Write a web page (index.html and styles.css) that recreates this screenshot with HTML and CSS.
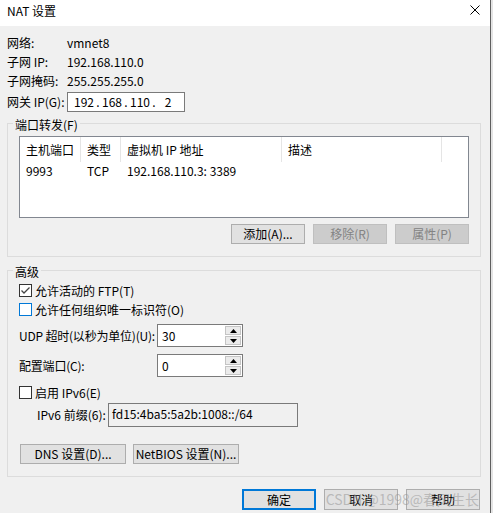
FILE: index.html
```
<!DOCTYPE html>
<html lang="zh-CN">
<head>
<meta charset="utf-8">
<title>NAT 设置</title>
<link rel="stylesheet" href="styles.css">
</head>
<body>
<div class="screen">
  <div class="dialog">
    <div class="titlebar">
      <span class="title">NAT 设置</span>
      <svg class="close" width="10" height="10" viewBox="0 0 10 10"><path d="M0.5 0.5 L9.5 9.5 M9.5 0.5 L0.5 9.5" stroke="#000" stroke-width="1" fill="none"/></svg>
    </div>
    <div class="body">
      <div class="info">
        <div class="info-row r1"><span class="lbl">网络:</span><span>vmnet8</span></div>
        <div class="info-row r2"><span class="lbl">子网 IP:</span><span>192.168.110.0</span></div>
        <div class="info-row r3"><span class="lbl">子网掩码:</span><span>255.255.255.0</span></div>
        <div class="info-row gw"><span class="lbl">网关 IP(G):</span>
          <div class="ipbox"><span class="oct">192</span><span class="dot">.</span><span class="oct">168</span><span class="dot">.</span><span class="oct">110</span><span class="dot">.</span><span class="oct">2</span></div>
        </div>
      </div>

      <fieldset class="group pf">
        <legend>端口转发(F)</legend>
        <div class="list">
          <div class="list-head">
            <div class="col c1">主机端口</div>
            <div class="col c2">类型</div>
            <div class="col c3">虚拟机 IP 地址</div>
            <div class="col c4">描述</div>
            <div class="col c5"></div>
          </div>
          <div class="list-row">
            <div class="col c1">9993</div>
            <div class="col c2">TCP</div>
            <div class="col c3">192.168.110.3: 3389</div>
            <div class="col c4"></div>
          </div>
        </div>
        <div class="btn-row">
          <button class="btn">添加(A)...</button>
          <button class="btn disabled">移除(R)</button>
          <button class="btn disabled">属性(P)</button>
        </div>
      </fieldset>

      <fieldset class="group adv">
        <legend>高级</legend>
        <div class="check-row">
          <span class="cbox"><svg width="11" height="11" viewBox="0 0 11 11"><path d="M1.5 5.5 L4 8 L9.5 2.5" stroke="#444" stroke-width="1.3" fill="none"/></svg></span>
          <span>允许活动的 FTP(T)</span>
        </div>
        <div class="check-row">
          <span class="cbox hover"></span>
          <span>允许任何组织唯一标识符(O)</span>
        </div>
        <div class="spin-row udp">
          <span class="spin-lbl">UDP 超时(以秒为单位)(U):</span>
          <div class="spin">
            <span class="spin-val">30</span>
            <div class="spin-btns">
              <span class="sbtn"><svg width="7" height="4" viewBox="0 0 7 4"><path d="M0 4 L3.5 0 L7 4 Z" fill="#000"/></svg></span>
              <span class="sbtn"><svg width="7" height="4" viewBox="0 0 7 4"><path d="M0 0 L7 0 L3.5 4 Z" fill="#000"/></svg></span>
            </div>
          </div>
        </div>
        <div class="spin-row cfg">
          <span class="spin-lbl">配置端口(C):</span>
          <div class="spin">
            <span class="spin-val">0</span>
            <div class="spin-btns">
              <span class="sbtn"><svg width="7" height="4" viewBox="0 0 7 4"><path d="M0 4 L3.5 0 L7 4 Z" fill="#000"/></svg></span>
              <span class="sbtn"><svg width="7" height="4" viewBox="0 0 7 4"><path d="M0 0 L7 0 L3.5 4 Z" fill="#000"/></svg></span>
            </div>
          </div>
        </div>
        <div class="check-row ipv6">
          <span class="cbox"></span>
          <span>启用 IPv6(E)</span>
        </div>
        <div class="prefix-row">
          <span class="prefix-lbl">IPv6 前缀(6):</span>
          <div class="prefix-box">fd15:4ba5:5a2b:1008::/64</div>
        </div>
        <div class="adv-btns">
          <button class="btn wide">DNS 设置(D)...</button>
          <button class="btn wide">NetBIOS 设置(N)...</button>
        </div>
      </fieldset>

      <div class="dialog-btns">
        <button class="btn primary">确定</button>
        <button class="btn">取消</button>
        <button class="btn">帮助</button>
        <span class="watermark">CSDN @1998@春风生长</span>
      </div>
    </div>
  </div>
  <div class="strip"></div>
</div>
</body>
</html>
```

FILE: styles.css
```
* { box-sizing: border-box; }
html, body { margin: 0; padding: 0; }
body {
  width: 493px;
  height: 513px;
  overflow: hidden;
  font: 12px/16px "Noto Sans CJK SC", "Noto Sans", sans-serif;
  color: #000;
  background: #f0f0f0;
}
.screen { display: flex; height: 513px; }
.dialog {
  width: 490px;
  height: 513px;
  background: #f0f0f0;
  display: flex;
  flex-direction: column;
}
.strip {
  flex: 1;
  border-left: 1px solid #5f5f5f;
  background: #e4e4e4;
}
.titlebar {
  height: 26px;
  flex: none;
  background: #fff;
  display: flex;
  justify-content: space-between;
  align-items: flex-start;
  padding: 3px 10px 0 7px;
}
.close { margin-top: 2px; display: block; }

.body { padding-top: 8px; }

.info { padding-left: 7px; }
.info-row { display: flex; align-items: center; white-space: nowrap; }
.r1 { height: 18px; }
.r2 { height: 19px; }
.r3 { height: 19px; }
.gw { height: 20px; margin-top: 2px; }
.lbl { width: 60px; flex: none; }
.ipbox {
  width: 118px;
  height: 20px;
  border: 1px solid #7a7a7a;
  background: #fff;
  display: flex;
  align-items: center;
  padding-left: 4px;
}
.oct { width: 24px; text-align: center; }
.dot { width: 4px; text-align: center; }

.group {
  margin: 0 9px 0 7px;
  border: 1px solid #dcdcdc;
  min-width: 0;
}
.group legend {
  padding: 4px 2px 0;
  margin-left: -6px;
  line-height: 16px;
}
.pf {
  margin-top: 1px;
  padding: 3px 11px 12px 11px;
}
.list {
  height: 82px;
  border: 1px solid #828790;
  background: #fff;
}
.list-head { display: flex; height: 25px; }
.list-head .col { border-right: 1px solid #e5e5e5; }
.list-head .c5 { border-right: none; flex: 1; }
.list-row { display: flex; height: 18px; }
.col {
  display: flex;
  align-items: center;
  padding-left: 6px;
  white-space: nowrap;
  flex: none;
}
.c1 { width: 61px; }
.c2 { width: 40px; }
.c3 { width: 161px; }
.c4 { width: 160px; }

.btn-row {
  display: flex;
  justify-content: flex-end;
  gap: 8px;
  margin-top: 6px;
}
.btn {
  width: 74px;
  height: 20px;
  padding: 0;
  border: 1px solid #adadad;
  background: #e1e1e1;
  font: inherit;
  line-height: 18px;
  color: #000;
  white-space: nowrap;
}
.btn.disabled {
  background: #cccccc;
  border-color: #bfbfbf;
  color: #838383;
}

.adv {
  margin-top: 3px;
  padding: 1px 11px 12px 11px;
}
.check-row {
  display: flex;
  align-items: center;
  height: 19px;
  gap: 3px;
  white-space: nowrap;
}
.cbox {
  width: 13px;
  height: 13px;
  border: 1px solid #333;
  background: #fff;
  display: flex;
  align-items: center;
  justify-content: center;
  flex: none;
}
.cbox.hover { border-color: #0078d7; }
.ipv6 { margin-top: 6px; }

.spin-row { display: flex; align-items: center; height: 23px; white-space: nowrap; }
.udp { margin-top: 5px; }
.cfg { margin-top: 7px; }
.spin-lbl { width: 138px; flex: none; letter-spacing: -0.2px; }
.spin {
  display: flex;
  width: 86px;
  height: 23px;
  border: 1px solid #7a7a7a;
  background: #fff;
  flex: none;
}
.spin-val {
  flex: 1;
  padding-left: 4px;
  line-height: 21px;
}
.spin-btns {
  width: 17px;
  display: flex;
  flex-direction: column;
  gap: 1px;
  padding: 1px 1px 1px 0;
}
.sbtn {
  flex: 1;
  border: 1px solid #c4c4c4;
  background: #ebebeb;
  display: flex;
  align-items: center;
  justify-content: center;
}
.sbtn svg { display: block; }

.prefix-row {
  display: flex;
  align-items: center;
  height: 24px;
  margin-top: 1px;
  padding-left: 18px;
  white-space: nowrap;
}
.prefix-lbl { width: 71px; flex: none; }
.prefix-box {
  width: 190px;
  height: 24px;
  border: 1px solid #7a7a7a;
  background: #f0f0f0;
  padding-left: 3px;
  line-height: 20px;
}
.adv-btns {
  display: flex;
  gap: 7px;
  margin-top: 17px;
  margin-left: 1px;
}
.btn.wide { width: 106px; }

.dialog-btns {
  position: relative;
  display: flex;
  justify-content: flex-end;
  gap: 8px;
  margin-top: 12px;
  padding-right: 10px;
}
.dialog-btns .btn { height: 21px; }
.btn.primary {
  border: 2px solid #0078d7;
  line-height: 17px;
}
.watermark {
  position: absolute;
  right: 11px;
  top: 1px;
  font-size: 14px;
  line-height: 18px;
  color: rgba(150, 150, 150, 0.55);
  white-space: nowrap;
  pointer-events: none;
}
```
